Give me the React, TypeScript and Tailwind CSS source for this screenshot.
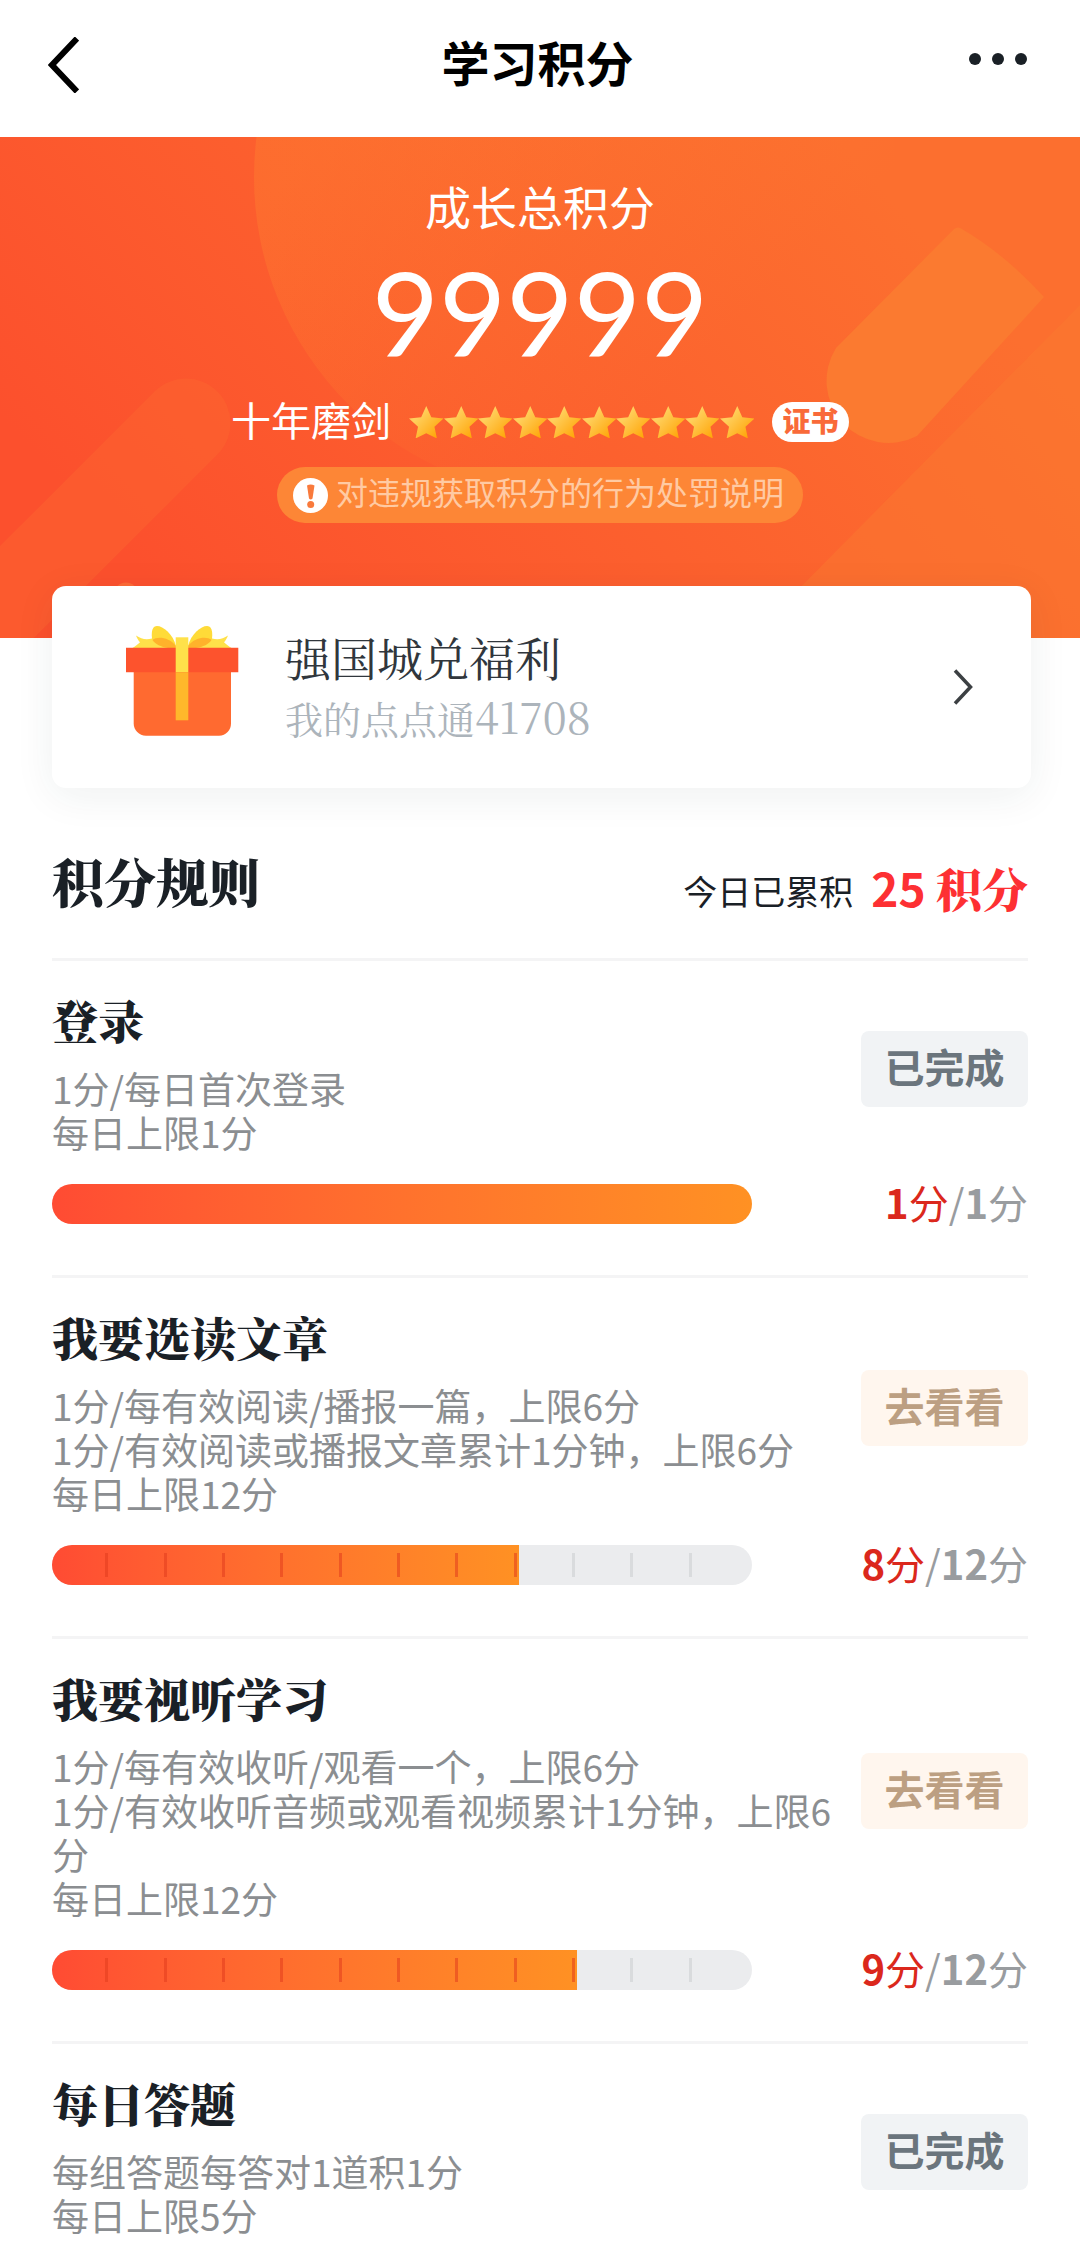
import React from 'react';

type Rule = {
    title: string;
    lines: string[];
    done: boolean;
    score?: number;
    limit?: number;
};

const rules: Rule[] = [
    { title: '登录', lines: ['1分/每日首次登录', '每日上限1分'], done: true, score: 1, limit: 1 },
    {
        title: '我要选读文章',
        lines: ['1分/每有效阅读/播报一篇，上限6分', '1分/有效阅读或播报文章累计1分钟，上限6分', '每日上限12分'],
        done: false,
        score: 8,
        limit: 12,
    },
    {
        title: '我要视听学习',
        lines: ['1分/每有效收听/观看一个，上限6分', '1分/有效收听音频或观看视频累计1分钟，上限6分', '每日上限12分'],
        done: false,
        score: 9,
        limit: 12,
    },
    { title: '每日答题', lines: ['每组答题每答对1道积1分', '每日上限5分'], done: true },
];

const Star = () => (
    <svg viewBox="0 0 34 32" className="min-w-0 flex-1" aria-hidden="true">
        <path
            d="M17 0 22 11 34 12.4 25.1 20.5 27.5 32 17 26.8 6.5 32 8.9 20.5 0 12.4 12 11Z"
            fill="url(#star)"
        />
    </svg>
);

const Gift = () => (
    <svg viewBox="0 0 113 110" className="mb-3 h-[110px] w-[113px] shrink-0" aria-hidden="true">
        <path d="M10 9.5C15 13 20 14 26 12.5L50 21.7V22H6.5C9 20.5 12 18.5 14 16.3 12.5 14.5 11 12.5 10 9.5Z" fill="#ffe14a" />
        <path d="M102 9.5C97 13 92 14 86 12.5L62 21.7V22H105.5C103 20.5 100 18.5 98 16.3 99.5 14.5 101 12.5 102 9.5Z" fill="#ffe14a" />
        <path d="M50 20C47 8 37 0 31 0 27 0 25 4 26 13 30 18 40 21 50 21Z" fill="#ffdb38" />
        <path d="M62 20C65 8 75 0 81 0 85 0 87 4 86 13 82 18 72 21 62 21Z" fill="#ffdb38" />
        <path d="M26.5 14C31 10 43 11 50 20V22H42C35 21 29 18 26.5 14Z" fill="#ffb22b" />
        <path d="M85.5 14C81 10 69 11 62 20V22H70C77 21 83 18 85.5 14Z" fill="#ffb22b" />
        <path d="M7.7 46H105V97.5C105 104 100 109.7 93 109.7H20C13 109.7 7.7 104 7.7 97.5Z" fill="#ff6a30" />
        <path d="M0 21.7H112.3V46.3H0Z" fill="#fd532d" />
        <path d="M49.7 11.3H62.3V46.3H49.7Z" fill="#ffe14a" />
        <path d="M49.7 46.3H62.3V94.3H49.7Z" fill="#ffb72b" />
    </svg>
);

// Decorative shapes behind the total score
const BannerShapes = () => (
    <svg
        viewBox="0 0 1080 501"
        preserveAspectRatio="xMidYMid slice"
        className="absolute inset-0 h-full w-full"
        aria-hidden="true"
    >
        <defs>
            <linearGradient id="banner" gradientUnits="userSpaceOnUse" x1="200" y1="500" x2="800" y2="-40">
                <stop offset="0" stopColor="#fc502d" />
                <stop offset="0.5" stopColor="#fc602e" />
                <stop offset="1" stopColor="#fc6f2f" />
            </linearGradient>
            <linearGradient id="disc" gradientUnits="userSpaceOnUse" x1="350" y1="-20" x2="640" y2="280">
                <stop offset="0" stopColor="#ff8a30" stopOpacity="0.32" />
                <stop offset="1" stopColor="#ff8a30" stopOpacity="0" />
            </linearGradient>
            <linearGradient id="star" x1="0.1" y1="0.2" x2="0.9" y2="0.9">
                <stop offset="0.2" stopColor="#ffcf5c" />
                <stop offset="1" stopColor="#ffa405" />
            </linearGradient>
        </defs>
        <path d="M0 0H1080V501H0Z" fill="url(#banner)" />
        <circle cx="575" cy="40" r="321" fill="url(#disc)" />
        <path d="M186 286-100 572" stroke="#fc6830" strokeOpacity="0.4" strokeWidth="89" strokeLinecap="round" />
        <path d="M126 458 60 524" stroke="#fc7038" strokeOpacity="0.8" strokeWidth="25" strokeLinecap="round" />
        <path d="M1080 168V501H750Z" fill="#fb7a30" fillOpacity="0.45" />
        <path d="M954 92 836 211A62 62 0 0 0 917 299L1044 160Q1006 118 962 92Q958 89 954 92Z" fill="#fb7a30" />
    </svg>
);

const ProgressBar = ({ score, limit }: { score: number; limit: number }) => (
    <div
        role="progressbar"
        aria-valuenow={score}
        aria-valuemax={limit}
        className="relative h-10 flex-1 overflow-hidden rounded-full bg-[#ebecee]"
    >
        <div
            className="h-full bg-linear-to-r from-[#ff4b33] to-[#ff9123]"
            style={{ width: `${(score / limit) * 100}%` }}
        ></div>
        <div className="absolute inset-0 grid auto-cols-fr grid-flow-col items-center">
            {Array.from({ length: limit }, (_, i) => (
                <span
                    key={i}
                    className={`mr-0.5 h-6 ${i === limit - 1 ? '' : i < score ? 'border-r-3 border-[#e23c1e]/55' : 'border-r-3 border-[#d9dbdd]'}`}
                ></span>
            ))}
        </div>
    </div>
);

const RuleItem = ({ rule }: { rule: Rule }) => (
    <li className="border-b-3 border-[#f4f4f5] pt-[23px] pb-[51px] last:border-b-0 last:pb-6">
        <div className="flex items-center">
            <div className="min-w-0 flex-1 pt-[11px]">
                <h3 className="font-['Noto_Serif_CJK_SC',serif] text-[46px] leading-[48px] font-black text-[#1a2026]">
                    {rule.title}
                </h3>
                <div className="mt-[23px] text-[37px] leading-[44px] text-[#8b8e91]">
                    {rule.lines.map((line) => (
                        <p key={line}>{line}</p>
                    ))}
                </div>
            </div>
            <button
                className={`h-[76px] w-[167px] shrink-0 rounded-lg pb-1.5 text-[40px] leading-[60px] font-bold ${rule.done ? 'bg-[#f1f3f5] text-[#6b757d]' : 'bg-[#fff6ee] text-[#bc9f82]'}`}
            >
                {rule.done ? '已完成' : '去看看'}
            </button>
        </div>
        {rule.score !== undefined && rule.limit !== undefined && (
            <div className="mt-[30px] flex items-start">
                <ProgressBar score={rule.score} limit={rule.limit} />
                <p className="w-[276px] text-right text-[40px] leading-9 text-[#999c9f]">
                    <span className="text-[#db281c]">
                        <b>{rule.score}</b>分
                    </span>
                    /<b>{rule.limit}</b>分
                </p>
            </div>
        )}
    </li>
);

const App = () => {
    return (
        <div className="min-h-screen bg-white font-['Noto_Sans_CJK_SC',sans-serif]">
            <header className="grid grid-cols-3 items-center pt-[25px] pr-[53px] pb-10 pl-12">
                <button aria-label="返回" className="justify-self-start pt-2">
                    <svg viewBox="0 0 31 56" className="h-14 w-[31px]" fill="none" stroke="#000" strokeWidth="6">
                        <path d="M29 1.5 4 28 29 54.5" />
                    </svg>
                </button>
                <h1 className="text-center text-5xl leading-[72px] font-bold text-black">学习积分</h1>
                <button aria-label="更多" className="justify-self-end pb-1">
                    <svg viewBox="0 0 58 12" className="h-3 w-[58px]" fill="#1a2026">
                        <circle cx="6" cy="6" r="6" />
                        <circle cx="29" cy="6" r="6" />
                        <circle cx="52" cy="6" r="6" />
                    </svg>
                </button>
            </header>

            <section className="relative pt-[38px] pb-[115px] text-white">
                <BannerShapes />
                <div className="relative flex flex-col items-center">
                    <h2 className="text-[46px] leading-[60px]">成长总积分</h2>
                    <p className="mt-[17px] font-['Lato',sans-serif] text-[116px] leading-[120px]">99999</p>
                    <div className="mt-[30px] flex h-10 items-center gap-[18px]">
                        <span className="pb-1.5 text-[40px] leading-10">十年磨剑</span>
                        <span className="flex w-[345px]">
                            {Array.from({ length: 10 }, (_, i) => (
                                <Star key={i} />
                            ))}
                        </span>
                        <a
                            href="#certificate"
                            className="flex h-10 w-[77px] items-center justify-center rounded-full bg-white pb-1 text-[28px] leading-9 font-black text-[#f96a39]"
                        >
                            证书
                        </a>
                    </div>
                    <a
                        href="#penalty"
                        className="mt-[25px] flex h-14 items-center gap-2 rounded-full bg-[#fd8636] pr-[19px] pl-4 text-[#ffcaa3]"
                    >
                        <svg viewBox="0 0 35 35" className="h-[35px] w-[35px]" aria-hidden="true">
                            <circle cx="17.5" cy="17.5" r="17.5" fill="#fff" />
                            <path d="M14 7.5Q17.5 5.5 21.5 7.5L19.5 20.5Q17.7 22.5 16 20.5Z" fill="#f97a3c" />
                            <circle cx="17.7" cy="26.5" r="3.5" fill="#f97a3c" />
                        </svg>
                        <span className="pb-2 text-[32px] leading-10">对违规获取积分的行为处罚说明</span>
                    </a>
                </div>
            </section>

            <a
                href="#mall"
                className="relative -mt-[52px] mr-[49px] ml-[52px] flex h-[202px] items-center rounded-[14px] bg-white pr-[58px] pl-[74px] font-['Noto_Serif_CJK_SC',serif] shadow-[0_8px_40px_rgba(30,60,60,0.07)]"
            >
                <Gift />
                <div className="ml-[46px] flex-1">
                    <h2 className="text-[46px] leading-[60px] text-[#30363c]">强国城兑福利</h2>
                    <p className="text-[38px] leading-[60px] text-[#acb4bb]">
                        我的点点通<span className="text-[43px]">41708</span>
                    </p>
                </div>
                <svg viewBox="0 0 20 36" className="h-9 w-5" fill="none" stroke="#3c4043" strokeWidth="3.5">
                    <path d="M2 1.5 17.5 18 2 34.5" />
                </svg>
            </a>

            <main className="px-[52px]">
                <div className="flex items-end border-b-3 border-[#f4f4f5] pt-[61px] pb-[45px]">
                    <h2 className="flex-1 font-['Noto_Serif_CJK_SC',serif] text-[52px] leading-[64px] font-black text-[#1a2026]">
                        积分规则
                    </h2>
                    <p className="text-[34px] leading-[44px] text-[#1a2026]">今日已累积</p>
                    <p className="ml-[18px] text-[46px] leading-[52px] font-bold text-[#fd3033]">
                        25 <span className="font-['Noto_Serif_CJK_SC',serif] font-black">积分</span>
                    </p>
                </div>
                <ul>
                    {rules.map((rule) => (
                        <RuleItem key={rule.title} rule={rule} />
                    ))}
                </ul>
            </main>
        </div>
    );
};

export default App;
